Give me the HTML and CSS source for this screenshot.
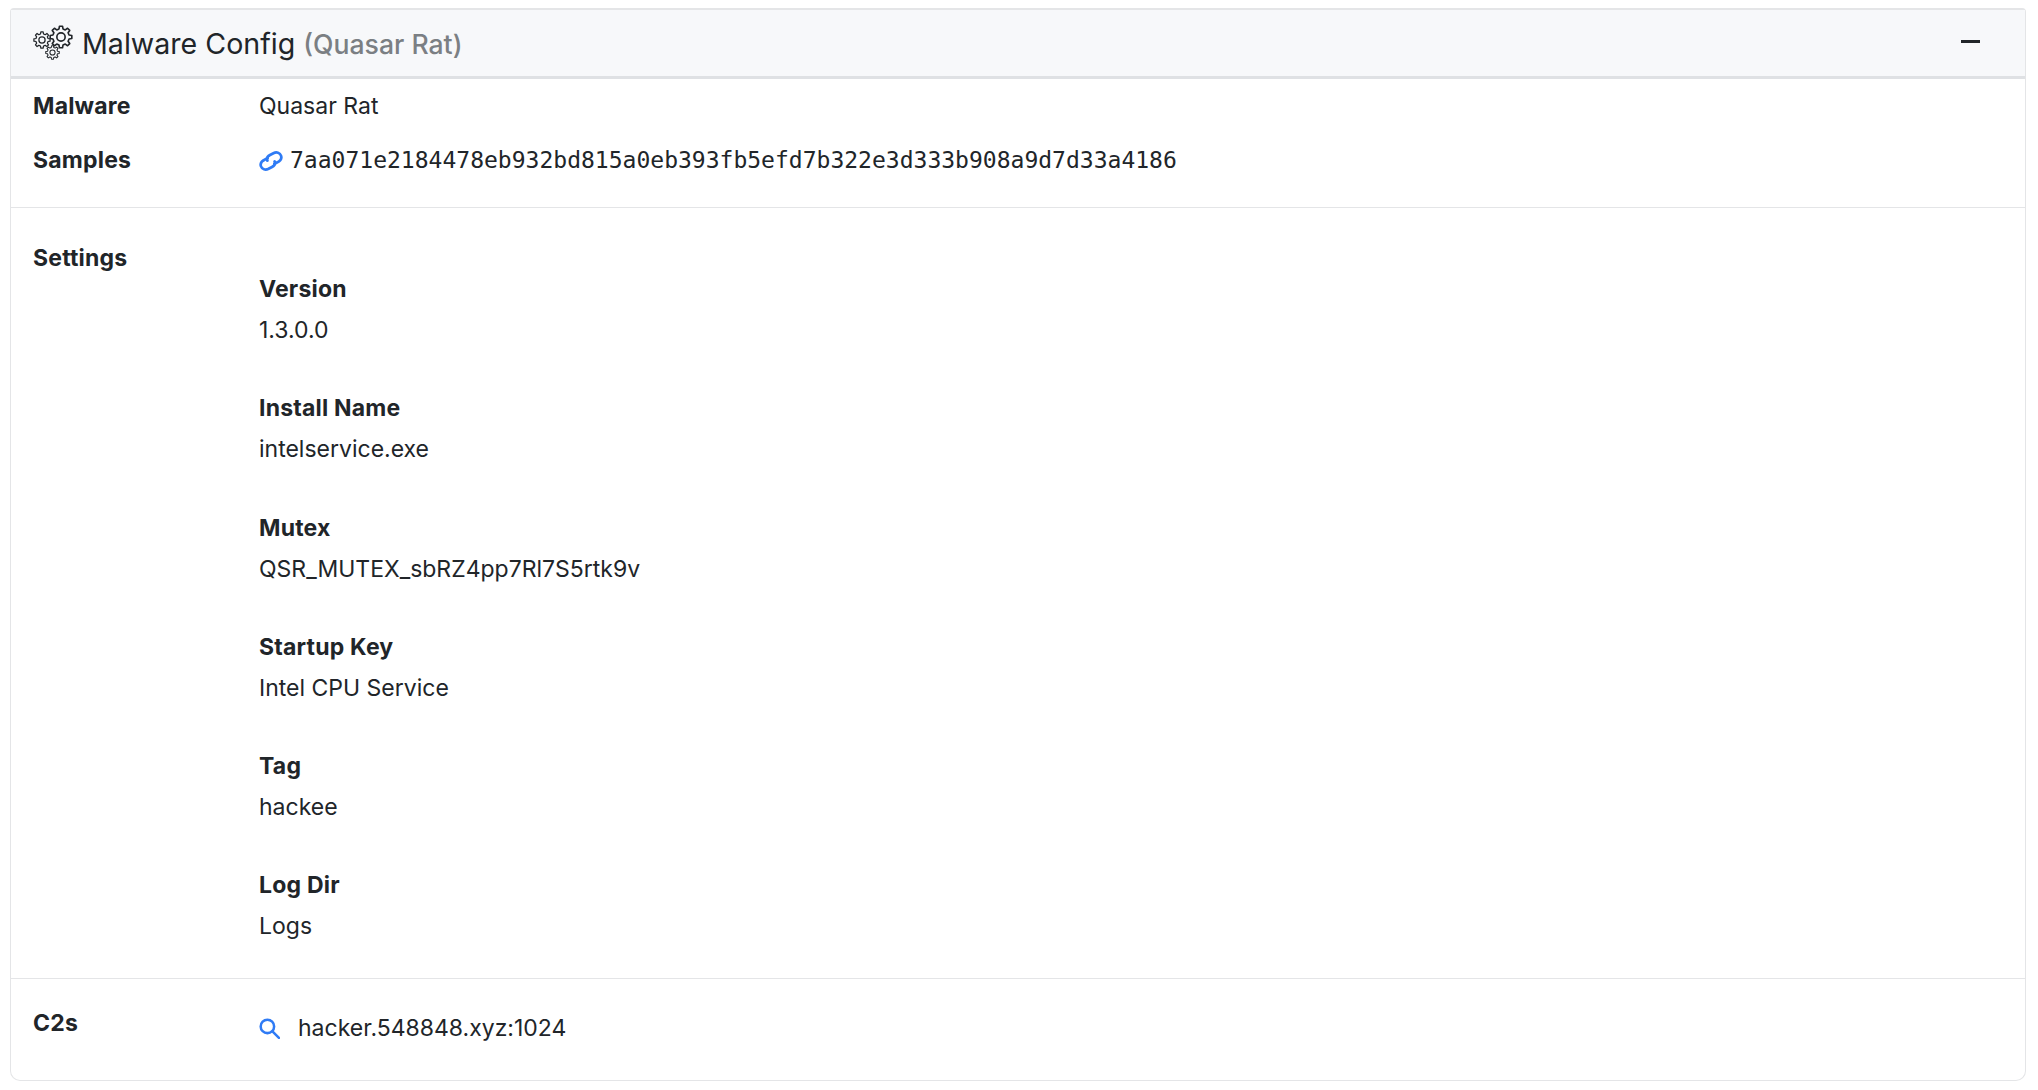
FILE: index.html
```html
<!DOCTYPE html>
<html lang="en">
<head>
<meta charset="utf-8">
<title>Malware Config</title>
<link rel="stylesheet" href="styles.css">
</head>
<body>
<svg class="defs" width="0" height="0" aria-hidden="true">
  <symbol id="gear" viewBox="-11 -11 22 22" overflow="visible">
    <path d="M9.9 1.39L7.37 1.84L6.51 3.91L7.99 6.02L6.02 7.99L3.91 6.51L1.84 7.37L1.39 9.9L-1.39 9.9L-1.84 7.37L-3.91 6.51L-6.02 7.99L-7.99 6.02L-6.51 3.91L-7.37 1.84L-9.9 1.39L-9.9 -1.39L-7.37 -1.84L-6.51 -3.91L-7.99 -6.02L-6.02 -7.99L-3.91 -6.51L-1.84 -7.37L-1.39 -9.9L1.39 -9.9L1.84 -7.37L3.91 -6.51L6.02 -7.99L7.99 -6.02L6.51 -3.91L7.37 -1.84L9.9 -1.39Z" fill="none" stroke="currentColor" stroke-width="1.5" stroke-linejoin="round"/>
    <circle r="3.8" fill="none" stroke="currentColor" stroke-width="1.5"/>
  </symbol>
</svg>
<section class="card">
  <header class="card-head">
    <h2 class="title">
      <svg class="gears" width="40" height="36" viewBox="0 0 40 36">
        <use href="#gear" x="16" y="0" width="24" height="24"/>
        <use href="#gear" x="0" y="6" width="18" height="18"/>
        <use href="#gear" x="12" y="20" width="15" height="15"/>
      </svg>
      <span>Malware Config</span>
      <small class="title-sub">(Quasar Rat)</small>
    </h2>
    <span class="collapse" aria-label="Collapse"></span>
  </header>

  <div class="block block-info">
    <div class="row">
      <div class="label">Malware</div>
      <div class="value">Quasar Rat</div>
    </div>
    <div class="row">
      <div class="label">Samples</div>
      <div class="value sample">
        <svg class="link-icon" width="24" height="20" viewBox="0 0 24 20" fill="none" stroke="#2f7bf5" stroke-width="2.7" stroke-linecap="round">
          <path d="M8.6 7.2L6 8.4C2.6 10 1 12.6 2 15.4C3 18.4 6.4 19.4 9.6 17.8L13 16C15.6 14.6 16.4 12.2 15.6 10.4"/>
          <path d="M15.4 12.8L18 11.6C21.4 10 23 7.4 22 4.6C21 1.6 17.6 0.6 14.4 2.2L11 4C8.4 5.4 7.6 7.8 8.4 9.6"/>
        </svg>
        <code class="hash">7aa071e2184478eb932bd815a0eb393fb5efd7b322e3d333b908a9d7d33a4186</code>
      </div>
    </div>
  </div>

  <div class="block block-settings">
    <div class="label">Settings</div>
    <div class="settings">
      <div class="setting"><div class="label">Version</div><div class="value">1.3.0.0</div></div>
      <div class="setting"><div class="label">Install Name</div><div class="value">intelservice.exe</div></div>
      <div class="setting"><div class="label">Mutex</div><div class="value">QSR_MUTEX_sbRZ4pp7Rl7S5rtk9v</div></div>
      <div class="setting"><div class="label">Startup Key</div><div class="value">Intel CPU Service</div></div>
      <div class="setting"><div class="label">Tag</div><div class="value">hackee</div></div>
      <div class="setting"><div class="label">Log Dir</div><div class="value">Logs</div></div>
    </div>
  </div>

  <div class="block block-c2">
    <div class="label">C2s</div>
    <div class="value c2">
      <svg class="search-icon" width="21" height="21" viewBox="0 0 20 20" fill="none" stroke="#2f7bf5" stroke-width="2.4" stroke-linecap="round">
        <circle cx="8" cy="8" r="6.4"/>
        <path d="M12.8 12.8L19 19"/>
      </svg>
      <span>hacker.548848.xyz:1024</span>
    </div>
  </div>
</section>
</body>
</html>
```
FILE: styles.css
```css
* { box-sizing: border-box; }
html, body { margin: 0; background: #fff; }
body {
  padding: 8px 12px 8px 10px;
  font-family: Inter, "Liberation Sans", sans-serif;
  font-size: 23px;
  line-height: 32px;
  color: #212529;
}
.defs { position: absolute; }
.card {
  border: 1px solid #e4e5e7;
  border-top: 2px solid #e4e5e7;
  border-radius: 4px 4px 10px 10px;
  height: 1073px;
  display: flex;
  flex-direction: column;
}
.card-head {
  height: 69px;
  display: flex;
  align-items: center;
  justify-content: space-between;
  padding: 0 45px 0 22px;
  background: #f7f8fa;
  border-bottom: 3px solid #dfe1e4;
}
.title {
  margin: 0;
  display: flex;
  align-items: center;
  font-weight: 400;
  font-size: 28.6px;
  line-height: 40px;
}
.title span, .title-sub { position: relative; top: 1px; }
.gears { margin-right: 9px; color: #212529; }
.title-sub {
  margin-left: 8px;
  font-size: 26.6px;
  font-weight: 500;
  color: #7b7f83;
}
.collapse {
  width: 19px;
  height: 3px;
  margin-top: -3px;
  background: #212529;
}
.label { font-weight: 700; letter-spacing: 0.2px; }
.block { padding: 0 22px; }
.block-info {
  padding-top: 11px;
  height: 129px;
  border-bottom: 1px solid #e4e5e7;
  display: flex;
  flex-direction: column;
  gap: 22px;
}
.row, .block-settings, .block-c2 {
  display: grid;
  grid-template-columns: 226px 1fr;
}
.sample, .c2 { display: flex; align-items: center; }
.link-icon { margin: 2px 7px 0 0; }
.hash {
  font-family: "DejaVu Sans Mono", "Liberation Mono", monospace;
  font-size: 23.02px;
}
.block-settings {
  height: 771px;
  padding-top: 34px;
  border-bottom: 1px solid #e4e5e7;
}
.settings {
  padding-top: 31px;
  display: flex;
  flex-direction: column;
  gap: 46.3px;
}
.setting { display: flex; flex-direction: column; gap: 9px; }
.block-c2 { padding-top: 28px; }
.c2 { padding-top: 5px; align-self: start; }
.search-icon { margin-right: 18px; }
```
